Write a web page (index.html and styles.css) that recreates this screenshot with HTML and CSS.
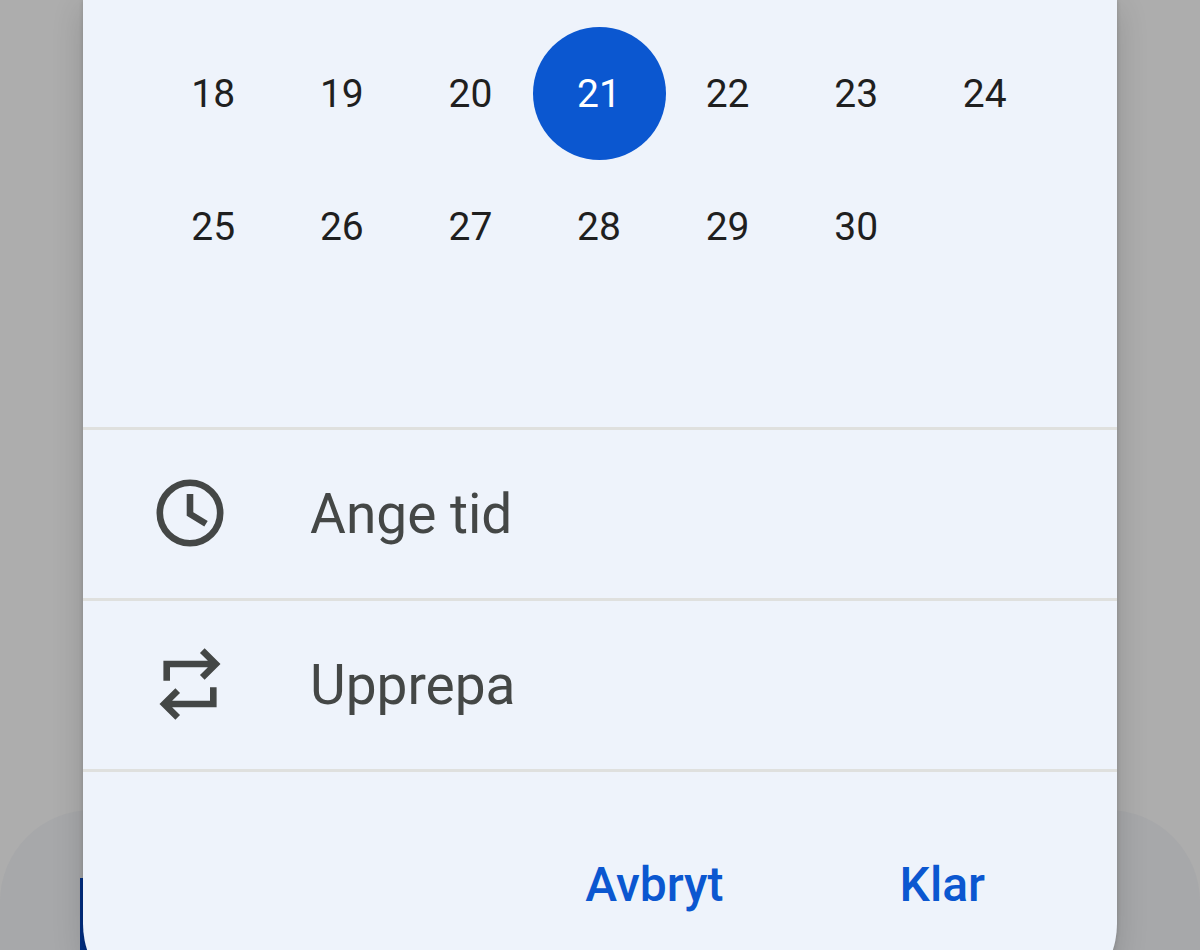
FILE: index.html
```html
<!DOCTYPE html>
<html lang="sv">
<head>
  <meta charset="UTF-8" />
  <meta name="viewport" content="width=device-width, initial-scale=1.0"/>
  <title>Välj datum</title>
  <link rel="stylesheet" href="styles.css">
</head>
<body>
  <div class="sheet"></div>
  <div class="sheet-button"></div>

  <main class="dialog" role="dialog" aria-label="Välj datum">
    <div class="days">
      <button class="day">18</button>
      <button class="day">19</button>
      <button class="day">20</button>
      <button class="day selected" aria-pressed="true">21</button>
      <button class="day">22</button>
      <button class="day">23</button>
      <button class="day">24</button>
      <button class="day">25</button>
      <button class="day">26</button>
      <button class="day">27</button>
      <button class="day">28</button>
      <button class="day">29</button>
      <button class="day">30</button>
    </div>

    <button class="option">
      <svg class="icon" viewBox="0 0 80 80" aria-hidden="true">
        <circle cx="40" cy="40" r="30.2"/>
        <path d="M40 21v20l16 9.7"/>
      </svg>
      <span>Ange tid</span>
    </button>
    <button class="option">
      <svg class="icon" viewBox="0 0 80 80" aria-hidden="true">
        <path d="M16.7 36.7V20H66M52.3 6.7L65.8 20L52.3 33.3"/>
        <path d="M63.3 43.3V60H14M27.7 46.7L14.2 60L27.7 73.3"/>
      </svg>
      <span>Upprepa</span>
    </button>

    <div class="actions">
      <button class="action">Avbryt</button>
      <button class="action">Klar</button>
    </div>
  </main>
</body>
</html>
```

FILE: styles.css
```css
:root {
  --surface: #eef3fb;
  --primary: #0b57d0;
  --text: #1f1f1f;
  --text-soft: #444746;
  --divider: #dfe0de;
  --font: Roboto, sans-serif;
}

* {
  box-sizing: border-box;
}

body {
  margin: 0;
  padding: 0 83px;
  height: 100vh;
  overflow: hidden;
  position: relative;
  background-color: #adadad;
  font-family: var(--font);
}

button {
  border: none;
  background: none;
  font-family: inherit;
  cursor: pointer;
}

/* Dimmed sheet behind the dialog */
.sheet {
  position: absolute;
  top: 810px;
  left: 0;
  right: 0;
  bottom: 0;
  border-radius: 92px 92px 0 0;
  background-color: #a7a8aa;
}

.sheet-button {
  position: absolute;
  top: 878px;
  left: 80px;
  width: 80px;
  bottom: 0;
  background-color: #002f85;
}

.dialog {
  position: relative;
  background-color: var(--surface);
  border-radius: 0 0 84px 84px;
  box-shadow: 0 8px 32px rgba(0, 0, 0, 0.16), 0 0 4px rgba(0, 0, 0, 0.16);
}

.days {
  display: grid;
  grid-template-columns: repeat(7, minmax(0, 1fr));
  grid-auto-rows: 133px;
  justify-items: center;
  padding: 27px 68px 134px 66px;
}

.day {
  width: 133px;
  height: 133px;
  padding: 0;
  border-radius: 50%;
  color: var(--text);
  font-size: 39px;
}

.day.selected {
  background-color: var(--primary);
  color: white;
}

.option {
  display: flex;
  align-items: center;
  gap: 80px;
  width: 100%;
  height: 171px;
  padding: 0 67px;
  border-top: 3px solid var(--divider);
  color: var(--text-soft);
  font-size: 55px;
}

.icon {
  width: 80px;
  height: 80px;
  margin-bottom: 2px;
  fill: none;
  stroke: currentColor;
  stroke-width: 6.6;
}

.actions {
  display: flex;
  justify-content: flex-end;
  gap: 80px;
  padding: 64px 84px 76px;
  border-top: 3px solid var(--divider);
}

.action {
  height: 96px;
  padding: 0 48px;
  color: var(--primary);
  font-size: 48px;
  font-weight: 500;
}
```
